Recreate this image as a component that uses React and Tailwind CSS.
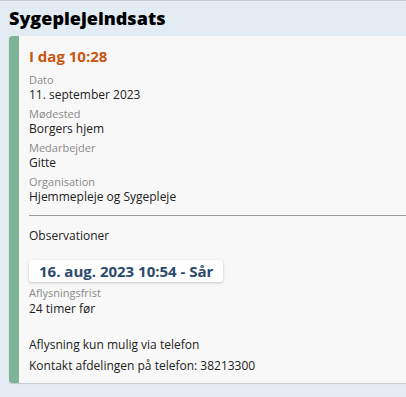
export default function App() {
  const rows = [
    ["Dato", "11. september 2023"],
    ["Mødested", "Borgers hjem"],
    ["Medarbejder", "Gitte"],
    ["Organisation", "Hjemmepleje og Sygepleje"],
  ];
  return (
    <div className="w-[406px] h-[397px] overflow-hidden bg-[#e4ecf3] border-t border-[#c9cbd0]" style={{ fontFamily: '"Open Sans", sans-serif' }}>
      <h1 className="pl-[9px] pt-[5px] pb-[5px] text-[18px] font-extrabold leading-[25px] text-black">Sygeplejeindsats</h1>
      <div className="ml-[9px] w-[420px] flex bg-[#f8f8f8] rounded-l-[3px] shadow-[0_1px_1px_rgba(0,0,0,0.15)]">
        <div className="w-[10px] bg-[#80b496] rounded-l-[3px] shrink-0" />
        <div className="flex-1 pl-[10px] pt-[10px] pb-[10px] text-[#222]">
          <div className="text-[15px] font-bold text-[#c9560f] leading-[20px]">I dag 10:28</div>
          <div className="mt-[7px] flex flex-col gap-[5px]">
            {rows.map(([l, v]) => (
              <div key={l} className="flex flex-col">
                <span className="text-[11px] leading-[14px] text-[#8a8a8a]">{l}</span>
                <span className="text-[12px] leading-[15px]">{v}</span>
              </div>
            ))}
          </div>
          <div className="mt-[11px] border-t border-[#9a9a9a]" />
          <div className="mt-[12px] text-[12px] leading-[15px]">Observationer</div>
          <div className="mt-[17px] inline-block bg-white px-[10px] rounded-[3px] shadow-[0_1px_3px_rgba(0,0,0,0.2)] text-[15px] font-bold leading-[22px] text-[#2c4a6d]">16. aug. 2023 10:54 - Sår</div>
          <div className="mt-[3px] text-[11px] leading-[14px] text-[#8a8a8a]">Aflysningsfrist</div>
          <div className="mt-[1px] text-[12px] leading-[15px]">24 timer før</div>
          <div className="mt-[21px] text-[12px] leading-[15px]">Aflysning kun mulig via telefon</div>
          <div className="mt-[6px] text-[12px] leading-[15px]">Kontakt afdelingen på telefon: 38213300</div>
        </div>
      </div>
    </div>
  );
}
